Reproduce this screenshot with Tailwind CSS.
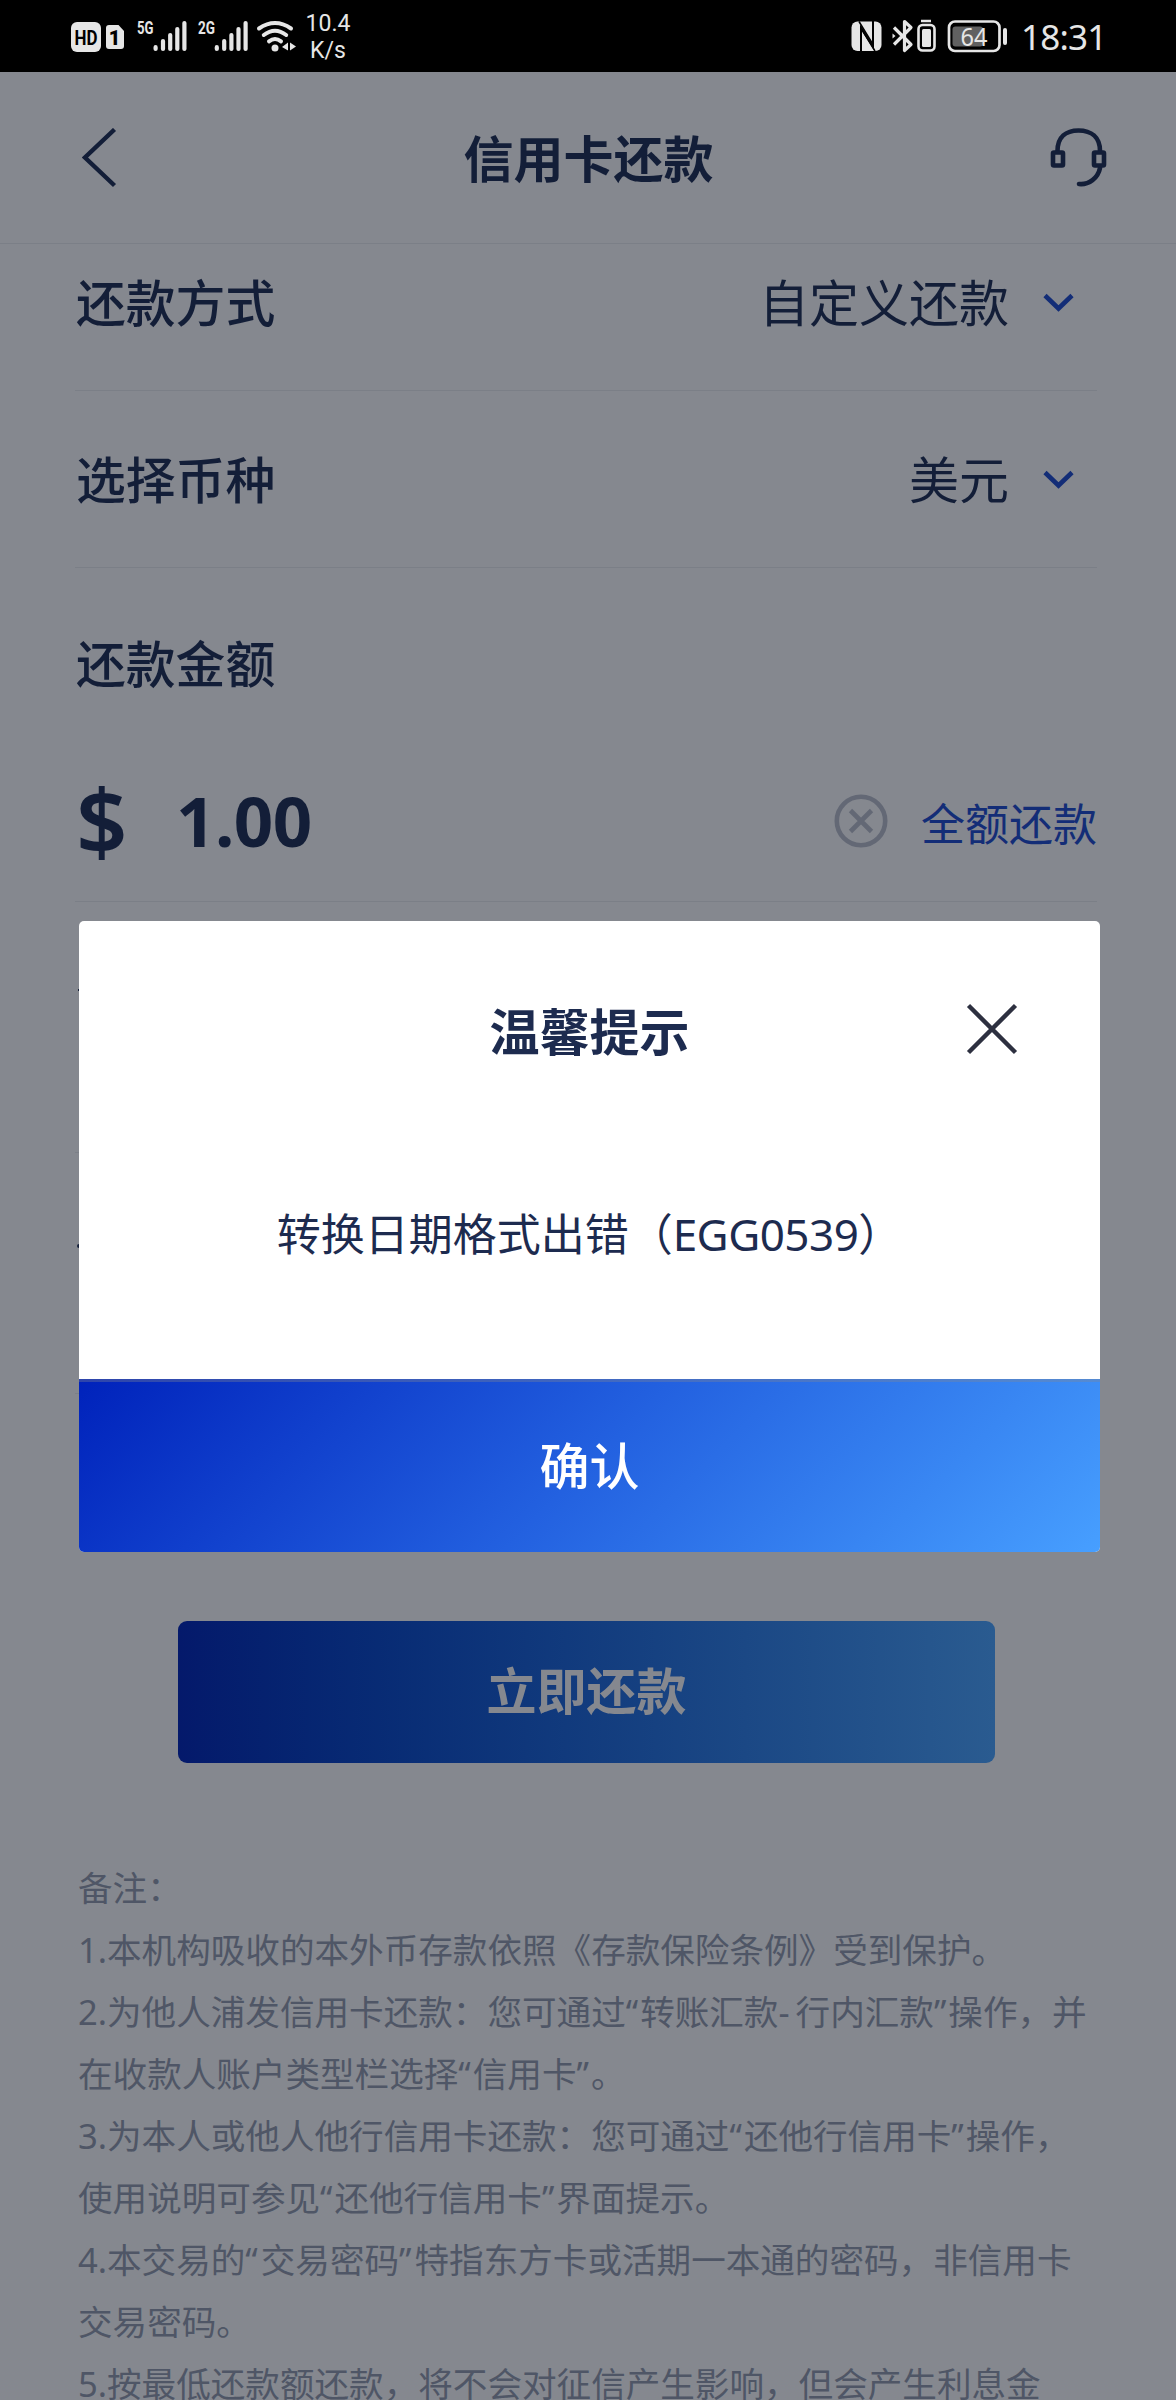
<!DOCTYPE html>
<html lang="zh-CN">
<head>
<meta charset="utf-8">
<title>信用卡还款</title>
<script src="https://cdn.jsdelivr.net/npm/@tailwindcss/browser@4"></script>
</head>
<body class="relative h-[2400px] w-[1176px] overflow-hidden bg-[#85888f] font-['Noto_Sans','Noto_Sans_CJK_SC',sans-serif] text-[#131e38]">

<!-- Status bar -->
<div class="flex h-[72px] items-start justify-between bg-black text-[#e6e6e6]">
  <div class="flex">
    <svg class="h-[72px] w-[300px]" viewBox="0 0 300 72" fill="#e6e6e6">
      <rect x="71" y="22" width="30" height="30" rx="6"/>
      <text x="86" y="44.5" text-anchor="middle" textLength="23" lengthAdjust="spacingAndGlyphs" font-family="Roboto" font-weight="700" font-size="20" fill="#000">HD</text>
      <path d="M109 25h9.500l5.500 6v15a3 3 0 0 1-3 3h-12a3 3 0 0 1-3-3V28a3 3 0 0 1 3-3z"/>
      <text x="114.500" y="45" text-anchor="middle" font-family="Roboto" font-weight="900" font-size="20" fill="#000">1</text>
      <text x="137" y="34" textLength="16.500" lengthAdjust="spacingAndGlyphs" font-family="Roboto" font-weight="700" font-size="18">5G</text>
      <text x="198" y="34" textLength="17" lengthAdjust="spacingAndGlyphs" font-family="Roboto" font-weight="700" font-size="18">2G</text>
      <g stroke="#e6e6e6" stroke-width="4.200" stroke-linecap="round">
        <path d="M155.600 47.200V49M163 41v8M170.200 35v8V49M177.300 29v20M184.400 23v26"/>
        <path d="M216.800 47.200V49M224.200 41v8M231.400 35v8V49M238.500 29v20M245.600 23v26"/>
      </g>
      <g fill="none" stroke="#e6e6e6" stroke-width="4" stroke-linecap="round">
        <path d="M259 28.500q16-11 32 0M263.800 35q11.200-8.500 22.400 0M269 41.300q6-4.500 12 0"/>
      </g>
      <circle cx="275" cy="48" r="3.500"/>
      <path d="M288 42.500v8l-6-3.500zM290 42.500l6 4-6 4z"/>
    </svg>
    <div class="flex w-[56px] flex-col items-center pt-[10px] font-[Roboto] text-[23px] leading-[27px]"><span>10.4</span><span>K/s</span></div>
  </div>
  <div class="flex">
    <svg class="h-[72px] w-[172px]" viewBox="850 0 172 72" fill="none" stroke="#e6e6e6">
      <rect x="852.500" y="21.500" width="30" height="29.500" rx="6" fill="#e6e6e6" stroke="none"/>
      <path d="M862 51V28l12 19V21" stroke="#000" stroke-width="2"/>
      <path d="M860 21.500l14 23v-23M876 51l-14-23v23" stroke="#000" stroke-width="1.500"/>
      <path d="M895 27.500l17 17-6.500 6v-29l6.500 6-17 17" stroke-width="3.200" stroke-linejoin="round"/>
      <path d="M893.500 33.500l3 2.500-3 2.500z" fill="#e6e6e6" stroke="none"/>
      <path d="M922 21h10" stroke-width="2.500"/>
      <rect x="919.500" y="25" width="16" height="25.500" rx="4" stroke-width="2.600"/>
      <rect x="923" y="29" width="9" height="18" rx="1.500" fill="#e6e6e6" stroke="none"/>
      <rect x="953.500" y="26.500" width="30.500" height="20" rx="3" fill="#606060" stroke="none"/>
      <rect x="950" y="21.500" width="50.500" height="29.500" rx="6" stroke-width="2.700"/>
      <path d="M1006 30v13" stroke-width="4" stroke-linecap="round"/>
      <text x="975" y="45.500" text-anchor="middle" font-family="Noto Sans" font-size="25" fill="#e6e6e6" stroke="none" textLength="27" lengthAdjust="spacingAndGlyphs">64</text>
    </svg>
    <span class="w-[155px] pt-[19px] font-['Noto_Sans'] text-[35px] leading-[36px] tracking-[-0.8px]">18:31</span>
  </div>
</div>

<!-- Header -->
<header class="flex h-[172px] items-center justify-between border-b border-[#7b7f87] pr-[69px] pl-[82px]">
  <svg class="h-[60px] w-[58px]" viewBox="0 0 58 60" fill="none" stroke="#131e38" stroke-width="4.400"><path d="M32.500 1.500L3 29.500l29.500 28"/></svg>
  <h1 class="mr-[12px] pt-[2px] text-[50px] font-bold leading-[50px]">信用卡还款</h1>
  <svg class="h-[60px] w-[58px]" viewBox="0 0 58 60" fill="none" stroke="#131e38" stroke-width="4.600" stroke-linecap="round">
    <path d="M8.500 23C8.500 9 17 2.500 29.500 2.500S51 9 51 23M51 40C49 50 40 57 30 56"/>
    <rect x="4" y="24.500" width="10" height="13" rx="1"/>
    <rect x="45" y="24.500" width="10" height="13" rx="1"/>
  </svg>
</header>

<!-- Repayment form -->
<main class="mr-[79px] ml-[75px]">
  <section class="flex h-[147px] items-start justify-between border-b border-[#7b7f87] pt-[34px] pr-[23px] pl-px">
    <span class="text-[49.800px] font-medium leading-[50px]">还款方式</span>
    <div class="flex items-center gap-[33px]">
      <span class="text-[50px] leading-[50px]">自定义还款</span>
      <svg class="h-[20px] w-[32px]" viewBox="0 0 32 20" fill="none" stroke="#132d77" stroke-width="4.600"><path d="M3 2.500L16.500 15.500 30 2.500"/></svg>
    </div>
  </section>
  <section class="flex h-[177px] items-start justify-between border-b border-[#7b7f87] pt-[64px] pr-[23px] pl-px">
    <span class="text-[49.800px] font-medium leading-[50px]">选择币种</span>
    <div class="flex items-center gap-[33px]">
      <span class="text-[50px] leading-[50px]">美元</span>
      <svg class="h-[20px] w-[32px]" viewBox="0 0 32 20" fill="none" stroke="#132d77" stroke-width="4.600"><path d="M3 2.500L16.500 15.500 30 2.500"/></svg>
    </div>
  </section>
  <section class="h-[334px] border-b border-[#7b7f87] pt-[71px] pl-px">
    <div class="text-[49.800px] font-medium leading-[50px]">还款金额</div>
    <div class="mt-[82px] flex h-[100px] items-center">
      <span class="w-[100px] pb-[5px] text-[90px] font-semibold leading-[90px]">$</span>
      <span class="flex-1 pb-[2px] text-[69px] font-bold leading-[70px] tracking-[-0.5px]">1.00</span>
      <svg class="mr-[33px] h-[54px] w-[54px]" viewBox="0 0 54 54" fill="none" stroke="#636875" stroke-width="4.600"><circle cx="27" cy="27" r="24.200"/><path d="M16.500 16.500l21 21M37.500 16.500l-21 21"/></svg>
      <span class="pt-[5px] text-[44px] leading-[44px] text-[#132d77]">全额还款</span>
    </div>
  </section>
  <section class="h-[251px] border-b border-[#7b7f87] pt-[87px] pl-[3px]"><div class="h-[2px] w-[30px] bg-[#131e38]"></div></section>
  <section class="h-[241px] border-b border-[#7b7f87] pt-[91px] pl-[2px]"><div class="h-[4px] w-[30px] rounded-full bg-[#131e38]"></div></section>
</main>

<button class="mt-[227px] ml-[178px] block h-[142px] w-[817px] rounded-[9px] bg-linear-to-r from-[#04196b] to-[#2a5b90] pb-[2px] text-[50px] font-bold leading-[50px] text-[#85888f]">立即还款</button>

<!-- Notes -->
<div class="mt-[94px] ml-[78px] text-[34.600px] leading-[62px] whitespace-nowrap text-[#4f5666]">
  <p>备注：</p>
  <p>1.本机构吸收的本外币存款依照《存款保险条例》受到保护。</p>
  <p>2.为他人浦发信用卡还款：您可通过<span class="tracking-[2px]">“</span>转账汇款<span class="tracking-[6px]">-</span>行内汇款<span class="tracking-[2px]">”</span>操作，并</p>
  <p>在收款人账户类型栏选择<span class="tracking-[2px]">“</span>信用卡<span class="tracking-[2px]">”</span>。</p>
  <p>3.为本人或他人他行信用卡还款：您可通过<span class="tracking-[2px]">“</span>还他行信用卡<span class="tracking-[2px]">”</span>操作，</p>
  <p>使用说明可参见<span class="tracking-[2px]">“</span>还他行信用卡<span class="tracking-[2px]">”</span>界面提示。</p>
  <p>4.本交易的<span class="tracking-[3px]">“</span>交易密码<span class="tracking-[3px]">”</span>特指东方卡或活期一本通的密码，非信用卡</p>
  <p>交易密码。</p>
  <p>5.按最低还款额还款，将不会对征信产生影响，但会产生利息金</p>
</div>

<!-- Alert dialog -->
<div class="absolute top-[921px] left-[79px] flex h-[631px] w-[1021px] flex-col overflow-hidden rounded-[5px] bg-white text-[#1d2b4f]">
  <div class="relative flex justify-center pt-[86px]">
    <h2 class="text-[50px] font-bold leading-[50px]">温馨提示</h2>
    <svg class="absolute top-[81px] right-[81px] h-[54px] w-[54px]" viewBox="0 0 54 54" fill="none" stroke="#2d3040" stroke-width="4.400"><path d="M3.500 3.500l47 47M50.500 3.500l-47 47"/></svg>
  </div>
  <p class="flex-1 pt-[155px] text-center text-[44px] leading-[44px]">转换日期格式出错（<span class="tracking-[-0.5px]">EGG0539</span>）</p>
  <button class="flex h-[173px] flex-col items-stretch bg-linear-[135deg] from-[#0022bb] via-[#2361e0] to-[#479fff] text-white">
    <span class="h-[3px] bg-[#85888f]/35"></span>
    <span class="flex flex-1 items-center justify-center pb-[2px] text-[50px] font-medium leading-[50px]">确认</span>
  </button>
</div>
</body>
</html>
